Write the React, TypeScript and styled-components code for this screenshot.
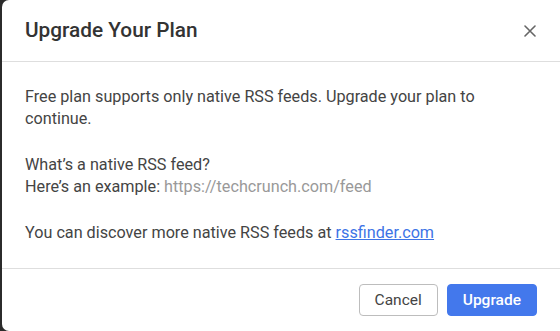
import React from "react";
import styled, { createGlobalStyle } from "styled-components";

const Global = createGlobalStyle`
  html, body { margin: 0; padding: 0; background: #2b2b2b; }
  body { width: 560px; height: 331px; overflow: hidden; font-family: Roboto, "Liberation Sans", sans-serif; }
`;

const Page = styled.div`
  display: flex;
  padding-left: 2px;
  height: 331px;
`;

const Dialog = styled.div`
  flex: 1;
  background: #fff;
  border-radius: 7px 0 0 7px;
  display: flex;
  flex-direction: column;
  height: 331px;
  box-sizing: border-box;
`;

const Header = styled.div`
  height: 62px;
  display: flex;
  align-items: center;
  justify-content: space-between;
  padding: 0 22px 0 23px;
  border-bottom: 1px solid #dedede;
  box-sizing: border-box;
`;

const Title = styled.h2`
  margin: 0 0 1px;
  font-size: 20.8px;
  font-weight: 500;
  color: #333;
`;

const CloseButton = styled.button`
  border: 0;
  background: none;
  padding: 0;
  width: 16px;
  height: 16px;
  display: flex;
  align-items: center;
  justify-content: center;
  cursor: pointer;
`;

const Body = styled.div`
  flex: 1;
  padding: 24px 23px 0;
  border-bottom: 1px solid #dedede;
`;

const Para = styled.p`
  margin: 0 0 24px;
  max-width: 490px;
  font-size: 16.2px;
  line-height: 22px;
  color: #444;
`;

const Muted = styled.span`
  color: #999;
`;

const Link = styled.a`
  color: #3d74e6;
  text-decoration: underline;
`;

const Footer = styled.div`
  height: 62px;
  display: flex;
  align-items: flex-start;
  justify-content: flex-end;
  gap: 9px;
  padding: 15px 23px 0;
  box-sizing: border-box;
`;

const Button = styled.button<{ $primary?: boolean }>`
  height: 32px;
  padding: 0 15px;
  border-radius: 4px;
  font-family: Roboto, "Liberation Sans", sans-serif;
  font-size: 15.5px;
  font-weight: ${(p) => (p.$primary ? 500 : 400)};
  border: 1px solid ${(p) => (p.$primary ? "#4378ec" : "#bdbdbd")};
  background: ${(p) => (p.$primary ? "#4378ec" : "#fff")};
  color: ${(p) => (p.$primary ? "#fff" : "#444")};
  cursor: pointer;
`;

export default function App() {
  return (
    <>
      <Global />
      <Page>
        <Dialog>
          <Header>
            <Title>Upgrade Your Plan</Title>
            <CloseButton aria-label="Close">
              <svg width="12" height="12" viewBox="0 0 12 12">
                <path d="M1 1L11 11M11 1L1 11" stroke="#666" strokeWidth="1.6" strokeLinecap="round" />
              </svg>
            </CloseButton>
          </Header>
          <Body>
            <Para>
              Free plan supports only native RSS feeds. Upgrade your plan to continue.
            </Para>
            <Para>
              What’s a native RSS feed?
              <br />
              Here’s an example: <Muted>https://techcrunch.com/feed</Muted>
            </Para>
            <Para>
              You can discover more native RSS feeds at <Link href="#">rssfinder.com</Link>
            </Para>
          </Body>
          <Footer>
            <Button>Cancel</Button>
            <Button $primary>Upgrade</Button>
          </Footer>
        </Dialog>
      </Page>
    </>
  );
}
